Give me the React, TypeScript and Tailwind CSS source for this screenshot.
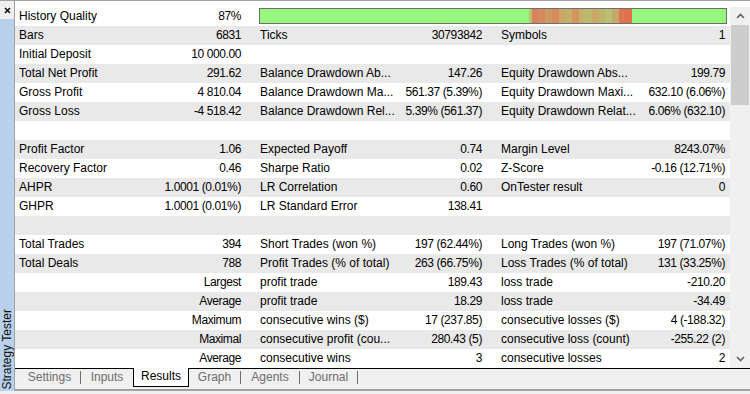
const rows: string[][] = [
  ["Bars", "6831", "Ticks", "30793842", "Symbols", "1"],
  ["Initial Deposit", "10 000.00", "", "", "", ""],
  ["Total Net Profit", "291.62", "Balance Drawdown Ab...", "147.26", "Equity Drawdown Abs...", "199.79"],
  ["Gross Profit", "4 810.04", "Balance Drawdown Ma...", "561.37 (5.39%)", "Equity Drawdown Maxi...", "632.10 (6.06%)"],
  ["Gross Loss", "-4 518.42", "Balance Drawdown Rel...", "5.39% (561.37)", "Equity Drawdown Relat...", "6.06% (632.10)"],
  ["", "", "", "", "", ""],
  ["Profit Factor", "1.06", "Expected Payoff", "0.74", "Margin Level", "8243.07%"],
  ["Recovery Factor", "0.46", "Sharpe Ratio", "0.02", "Z-Score", "-0.16 (12.71%)"],
  ["AHPR", "1.0001 (0.01%)", "LR Correlation", "0.60", "OnTester result", "0"],
  ["GHPR", "1.0001 (0.01%)", "LR Standard Error", "138.41", "", ""],
  ["", "", "", "", "", ""],
  ["Total Trades", "394", "Short Trades (won %)", "197 (62.44%)", "Long Trades (won %)", "197 (71.07%)"],
  ["Total Deals", "788", "Profit Trades (% of total)", "263 (66.75%)", "Loss Trades (% of total)", "131 (33.25%)"],
  ["", "Largest", "profit trade", "189.43", "loss trade", "-210.20"],
  ["", "Average", "profit trade", "18.29", "loss trade", "-34.49"],
  ["", "Maximum", "consecutive wins ($)", "17 (237.85)", "consecutive losses ($)", "4 (-188.32)"],
  ["", "Maximal", "consecutive profit (cou...", "280.43 (5)", "consecutive loss (count)", "-255.22 (2)"],
  ["", "Average", "consecutive wins", "3", "consecutive losses", "2"],
];

// quality bar stripes (red section)
const stripes = [
  "bg-[#b9c46c]", "bg-[#da8259]", "bg-[#d58c5d]", "bg-[#cf9a63]", "bg-[#d98a5b]", "bg-[#c9a568]",
  "bg-[#c4ae6c]", "bg-[#d4945f]", "bg-[#c2b26d]", "bg-[#bdb970]", "bg-[#c8a768]", "bg-[#c1b36d]",
  "bg-[#b7bf70]", "bg-[#c7a868]", "bg-[#de7553]", "bg-[#e0704f]",
];

const Group = ({ label, value, w, pr }: { label: string; value: string; w: string; pr: string }) => (
  <div className={`flex ${w} pl-[4px] ${pr}`}>
    <span className="flex-1 whitespace-nowrap overflow-hidden">{label}</span>
    <span className="whitespace-nowrap text-right tracking-[-0.4px]">{value}</span>
  </div>
);

const Chevron = ({ up }: { up?: boolean }) => (
  <svg width="9" height="6" viewBox="0 0 9 6" className="block">
    <path d={up ? "M1 5 L4.5 1.5 L8 5" : "M1 1 L4.5 4.5 L8 1"} fill="none" stroke="#606060" strokeWidth="1.6" />
  </svg>
);

export default function App() {
  return (
    <div
      className="w-[750px] h-[394px] flex border-t border-[#a0a0a0] bg-[#f0f0f0] pb-[3px] text-[12px] text-black overflow-hidden"
      style={{ fontFamily: '"Liberation Sans", Arial, sans-serif' }}
    >
      {/* side caption */}
      <div className="w-[14px] flex flex-col">
        <div className="h-[18px] flex items-center justify-center pt-[1px]">
          <svg width="7" height="7" viewBox="0 0 7 7">
            <path d="M1 1 L6 6 M6 1 L1 6" stroke="#111" strokeWidth="1.6" />
          </svg>
        </div>
        <div className="flex-1 bg-[#b9d1ea] flex flex-col justify-end pb-[2px] items-center">
          <span className="[writing-mode:vertical-rl] rotate-180 leading-[13px] whitespace-nowrap text-[#111]">
            Strategy Tester
          </span>
        </div>
      </div>

      <div className="flex-1 flex flex-col border-l border-[#a0a0a0] border-b-2 border-b-[#a0a0a0]">
        <div className="flex bg-white pt-[6px]">
          <div className="w-[715px] flex flex-col">
            <div className="flex h-[19px] leading-[19px]">
              <Group label="History Quality" value="87%" w="w-[241px]" pr="pr-[15px]" />
              <div className="flex-1 pl-[3px] pr-[3px] pt-[1px]">
                <div className="h-[16px] border border-[#6e6e6e] bg-[#98f77e] flex">
                  <div className="w-[269px]" />
                  {stripes.map((c, i) => (
                    <div key={i} className={`${c} ${i === 0 ? "w-[3px]" : "flex-1"}`} />
                  ))}
                  <div className="w-[94px]" />
                </div>
              </div>
            </div>
            {rows.map((r, i) => (
              <div key={i} className={`flex h-[19px] leading-[19px] ${i % 2 === 0 ? "bg-[#e9e9e9]" : "bg-white"}`}>
                <Group label={r[0]} value={r[1]} w="w-[241px]" pr="pr-[15px]" />
                <Group label={r[2]} value={r[3]} w="w-[241px]" pr="pr-[15px]" />
                <Group label={r[4]} value={r[5]} w="w-[233px]" pr="pr-[5px]" />
              </div>
            ))}
          </div>
          <div className="w-[20px] bg-[#f0f0f0] flex flex-col">
            <div className="h-[18px] flex items-center justify-center">
              <Chevron up />
            </div>
            <div className="h-[80px] mx-[1px] bg-[#cdcdcd]" />
            <div className="flex-1" />
            <div className="h-[18px] flex items-center justify-center">
              <Chevron />
            </div>
          </div>
        </div>

        <div className="h-[21px] border-t border-black flex items-start pl-[4px] text-[#6d6d6d]">
          <div className="w-[61px] h-[18px] leading-[17px] text-center">Settings</div>
          <div className="w-px h-[13px] mt-[2px] bg-[#6d6d6d]" />
          <div className="w-[52px] h-[18px] leading-[17px] text-center">Inputs</div>
          <div className="relative -mt-px w-[56px] h-[19px] leading-[17px] text-center bg-white border-x border-b border-black text-black">
            Results
          </div>
          <div className="w-[51px] h-[18px] leading-[17px] text-center">Graph</div>
          <div className="w-px h-[13px] mt-[2px] bg-[#6d6d6d]" />
          <div className="w-[58px] h-[18px] leading-[17px] text-center">Agents</div>
          <div className="w-px h-[13px] mt-[2px] bg-[#6d6d6d]" />
          <div className="w-[57px] h-[18px] leading-[17px] text-center">Journal</div>
          <div className="w-px h-[13px] mt-[2px] bg-[#6d6d6d]" />
        </div>
      </div>
    </div>
  );
}
